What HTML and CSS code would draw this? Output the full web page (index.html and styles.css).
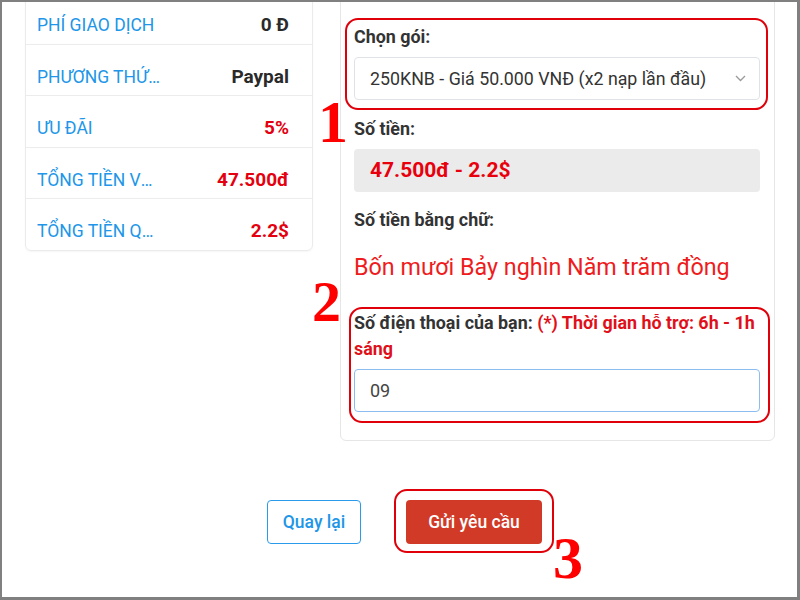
FILE: index.html
```html
<!DOCTYPE html>
<html lang="vi">
<head>
<meta charset="utf-8">
<title>Nạp KNB</title>
<link rel="stylesheet" href="styles.css">
</head>
<body>
<div class="frame">
  <div class="main">
    <div class="summary">
      <div class="row"><span class="label">PHÍ GIAO DỊCH</span><span class="value">0 Đ</span></div>
      <div class="row"><span class="label">PHƯƠNG THỨC THANH TOÁN</span><span class="value">Paypal</span></div>
      <div class="row"><span class="label">ƯU ĐÃI</span><span class="value red">5%</span></div>
      <div class="row"><span class="label">TỔNG TIỀN VNĐ</span><span class="value red">47.500đ</span></div>
      <div class="row"><span class="label">TỔNG TIỀN QUY ĐỔI</span><span class="value red">2.2$</span></div>
    </div>
    <div class="form-card">
      <div class="group g1">
        <div class="flabel">Chọn gói:</div>
        <div class="select">
          <span>250KNB - Giá 50.000 VNĐ (x2 nạp lần đầu)</span>
          <svg class="chev" width="11" height="7" viewBox="0 0 11 7"><path d="M1 1l4.5 4.5L10 1" fill="none" stroke="#9a9a9a" stroke-width="1.3"/></svg>
        </div>
        <span class="mark"></span>
        <span class="step step1">1</span>
      </div>
      <div class="group g2">
        <div class="flabel">Số tiền:</div>
        <div class="amount">47.500đ - 2.2$</div>
      </div>
      <div class="group g3">
        <div class="flabel">Số tiền bằng chữ:</div>
        <div class="words">Bốn mươi Bảy nghìn Năm trăm đồng</div>
      </div>
      <div class="group g4">
        <div class="flabel phone-label">Số điện thoại của bạn: <span class="hint">(*) Thời gian hỗ trợ: 6h - 1h sáng</span></div>
        <div class="input">09</div>
        <span class="mark"></span>
        <span class="step step2">2</span>
      </div>
    </div>
  </div>
  <div class="actions">
    <a class="btn btn-back">Quay lại</a>
    <span class="send-wrap">
      <a class="btn btn-send">Gửi yêu cầu</a>
      <span class="mark"></span>
      <span class="step step3">3</span>
    </span>
  </div>
</div>
</body>
</html>
```

FILE: styles.css
```css
* { box-sizing: border-box; }
html, body { margin: 0; padding: 0; background: #fff; }
body { font-family: Roboto, "Noto Sans", "Liberation Sans", sans-serif; color: #333; }

.frame {
  width: 800px;
  height: 600px;
  border-style: solid;
  border-color: #808080;
  border-width: 2px 3px 3px 2px;
  overflow: hidden;
  background: #fff;
}

.main {
  display: flex;
  align-items: flex-start;
  margin-top: -10px;
  padding-left: 23px;
  gap: 27px;
}

/* left summary card */
.summary {
  width: 288px;
  border: 1px solid #ebebeb;
  border-radius: 6px;
  box-shadow: 0 1px 2px rgba(0,0,0,0.04);
}
.row {
  display: flex;
  justify-content: space-between;
  align-items: center;
  padding: 19px 23px 5.5px 11px;
  line-height: 26px;
}
.row + .row { border-top: 1px solid #ececec; }
.label {
  width: 127px;
  font-size: 17.5px;
  color: #2196e8;
  white-space: nowrap;
  overflow: hidden;
  text-overflow: ellipsis;
}
.value { font-size: 19px; font-weight: 700; color: #2a2a2a; }
.value.red { color: #e4000f; }

/* right form card */
.form-card {
  width: 435px;
  border: 1px solid #e6e6e6;
  border-radius: 6px;
  padding: 30px 14px 28px 13px;
}
.group { position: relative; }
.flabel {
  font-size: 17.9px;
  font-weight: 700;
  line-height: 27px;
  margin-bottom: 6.5px;
  color: #333;
}
.select {
  height: 43px;
  border: 1px solid #dfe3e8;
  border-radius: 4px;
  display: flex;
  align-items: center;
  justify-content: space-between;
  padding: 0 13px 0 15px;
  font-size: 17.8px;
  color: #333;
}
.g2 { margin-top: 15.5px; }
.amount {
  height: 43px;
  background: #ebebeb;
  border-radius: 4px;
  padding-left: 16px;
  display: flex;
  align-items: center;
  font-size: 21px;
  font-weight: 700;
  color: #e8000c;
}
.g3 { margin-top: 14px; }
.words {
  padding-top: 11px;
  font-size: 23.3px;
  line-height: 35px;
  color: #ee1c1c;
}
.g4 { margin-top: 25px; }
.phone-label { line-height: 26px; margin-bottom: 7px; }
.hint { color: #e0101a; }
.input {
  height: 43px;
  border: 1px solid #8dbdf0;
  border-radius: 4px;
  padding-left: 15px;
  display: flex;
  align-items: center;
  font-size: 18px;
  color: #444;
}

/* buttons */
.actions {
  display: flex;
  justify-content: center;
  gap: 45px;
  margin-top: 59px;
  padding-left: 10px;
}
.btn {
  height: 44px;
  border-radius: 4px;
  font-size: 17.5px;
  font-weight: 500;
  display: inline-flex;
  align-items: center;
  justify-content: center;
}
.btn-back { width: 94px; border: 1px solid #2a9bea; color: #2196e8; background: #fff; }
.send-wrap { position: relative; display: inline-flex; }
.btn-send { width: 136px; background: #d23a28; color: #fff; }

/* screenshot annotations */
.mark {
  position: absolute;
  border: 2.5px solid #e0000a;
  border-radius: 13px;
  pointer-events: none;
}
.g1 .mark { top: -5px; bottom: -10px; left: -9px; right: -8px; }
.g4 .mark { top: -3.5px; bottom: -11px; left: -5px; right: -10px; }
.send-wrap .mark { top: -11px; bottom: -9px; left: -12px; right: -12px; }

.step {
  position: absolute;
  font-family: "Liberation Serif", "Times New Roman", serif;
  font-weight: 700;
  font-size: 58px;
  line-height: 1;
  color: #f00;
}
.step1 { left: -36px; top: 69px; font-size: 60px; }
.step2 { left: -42px; top: -37px; }
.step3 { left: 147px; top: 28px; font-size: 60px; }
```
